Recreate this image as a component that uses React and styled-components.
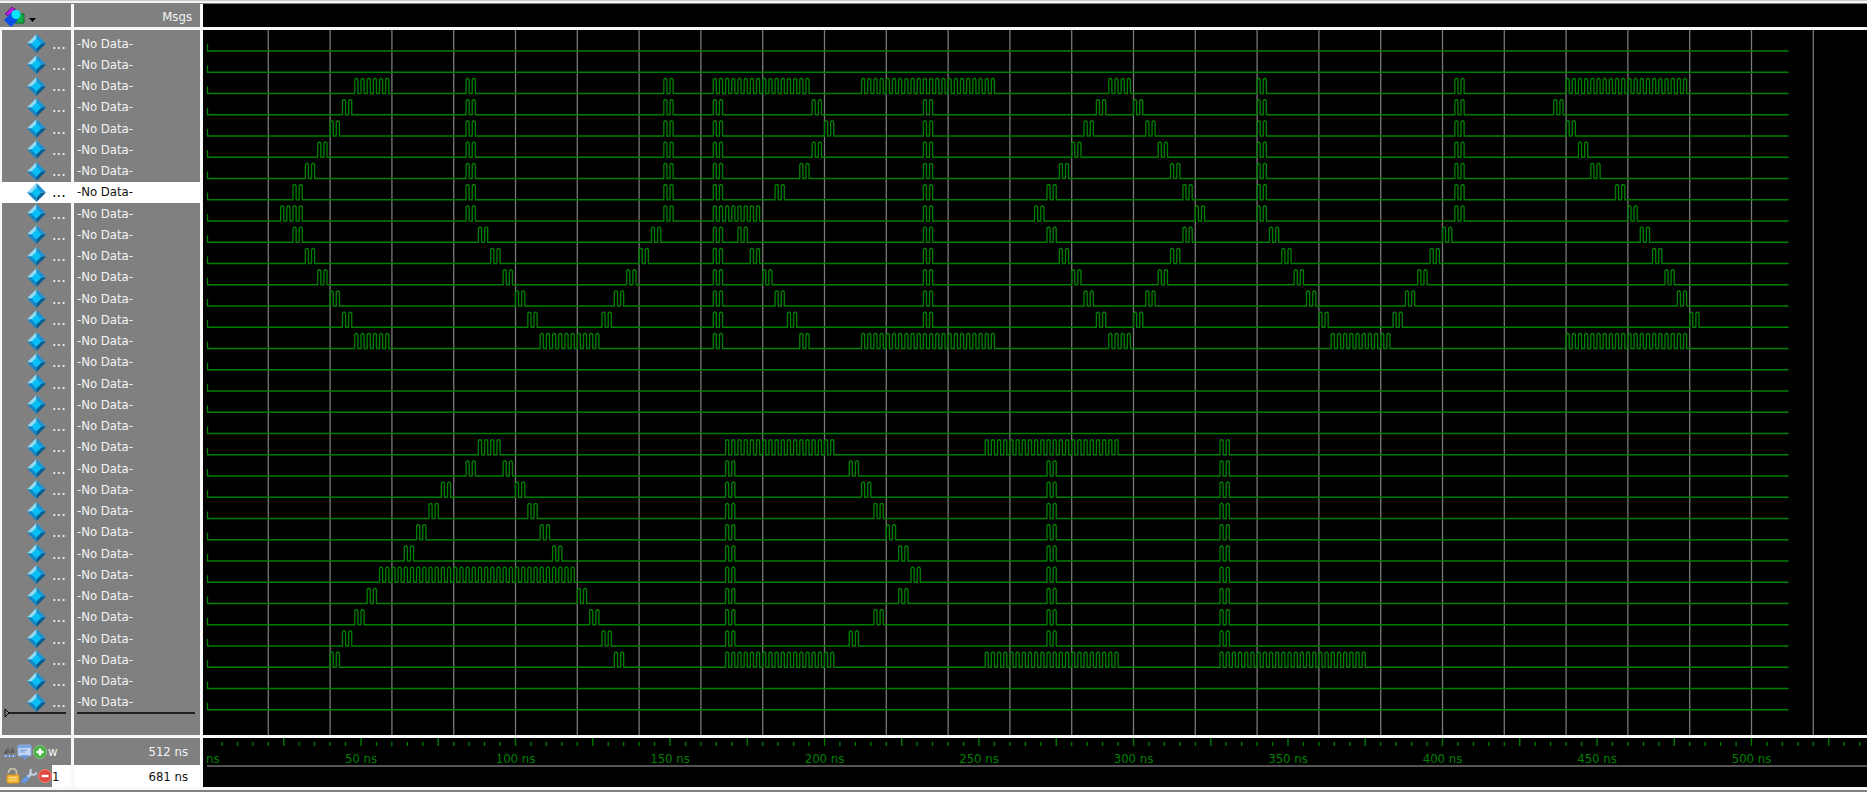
import React from "react";
import styled, { createGlobalStyle } from "styled-components";

const GRAY = "#808080";
const GREEN = "#008000";
const FONT = '"DejaVu Sans Condensed", "Open Sans", sans-serif';

const NS = 3.09;
const ORIGIN = 0.5;
const END = 512;
const ROWS = 32;
const PITCH = 680 / ROWS;
const SELECTED = 7;

const xAt = (ns) => ORIGIN + ns * NS;

/* Each entry lists the 4 ns slots in which a signal toggles, as slot or [first, last]. */
const PULSES = {
  2: [[12, 14], 21, 37, [41, 48], [53, 63], [73, 74], 85, 101, [110, 119]],
  3: [11, 21, 37, 41, 49, 58, 72, 75, 85, 101, 109],
  4: [10, 21, 37, 41, 50, 58, 71, 76, 85, 101, 110],
  5: [9, 21, 37, 41, 49, 58, 70, 77, 85, 101, 111],
  6: [8, 21, 37, 41, 48, 58, 69, 78, 85, 101, 112],
  7: [7, 21, 37, 41, 46, 58, 68, 79, 85, 101, 114],
  8: [[6, 7], 21, 37, [41, 44], 58, 67, 80, 85, 101, 115],
  9: [7, 22, 36, 41, 43, 58, 68, 79, 86, 100, 116],
  10: [8, 23, 35, 41, 44, 58, 69, 78, 87, 99, 117],
  11: [9, 24, 34, 41, 45, 58, 70, 77, 88, 98, 118],
  12: [10, 25, 33, 41, 46, 58, 71, 76, 89, 97, 119],
  13: [11, 26, 32, 41, 47, 58, 72, 75, 90, 96, 120],
  14: [[12, 14], [27, 31], 41, 48, [53, 63], [73, 74], [91, 95], [110, 119]],
  19: [[22, 23], [42, 50], [63, 73], 82],
  20: [21, 24, 42, 52, 68, 82],
  21: [19, 25, 42, 53, 68, 82],
  22: [18, 26, 42, 54, 68, 82],
  23: [17, 27, 42, 55, 68, 82],
  24: [16, 28, 42, 56, 68, 82],
  25: [[14, 29], 42, 57, 68, 82],
  26: [13, 30, 42, 56, 68, 82],
  27: [12, 31, 42, 54, 68, 82],
  28: [11, 32, 42, 52, 68, 82],
  29: [10, 33, [42, 50], [63, 73], [82, 93]],
};

const range = (n) => Array.from({ length: n }, (_, i) => i);

const GlobalStyle = createGlobalStyle`
  * { box-sizing: border-box; }
  body {
    margin: 0;
    background: ${GRAY};
    font-family: ${FONT};
    font-size: 13px;
    color: #f4f4f4;
  }
`;

const Window = styled.main`
  display: flex;
  flex-direction: column;
  min-height: 100vh;
  padding-bottom: 2px;
`;

const TopEdge = styled.div`
  height: 4px;
  background: #f4f4f4;
  border-top: 1px solid #c8c8c8;
  border-bottom: 1px solid ${GRAY};
`;

const Band = styled.section`
  display: flex;
  flex: ${(p) => (p.$grow ? "1 0 auto" : "0 0 auto")};
  height: ${(p) => p.$height || "auto"};
  border-bottom: 3px solid #f8f8f8;
`;

const SidePane = styled.div`
  display: flex;
  flex-direction: column;
  flex: 0 0 203px;
  border-right: 3px solid #f8f8f8;
  background: linear-gradient(
    to right,
    ${(p) => (p.$gutter ? "#f8f8f8" : GRAY)} 2px,
    ${GRAY} 2px 71px,
    #f8f8f8 71px 74px,
    ${GRAY} 74px
  );
`;

const Canvas = styled.div`
  flex: 1 1 0;
  min-width: 0;
  padding-left: 3px;
  background: #000;
  overflow: hidden;
`;

const HeaderCells = styled.div`
  display: flex;
  flex: 1;
  align-items: center;
  justify-content: space-between;
  padding: 2px 8px 0 3px;
`;

const IconButton = styled.button`
  display: inline-flex;
  align-items: center;
  gap: 4px;
  padding: 0;
  border: 0;
  background: none;
  line-height: 0;
`;

const SignalTable = styled.table`
  width: 200px;
  height: 680px;
  margin-top: 3px;
  border-collapse: separate;
  border-spacing: 0;
  table-layout: fixed;
`;

const SignalRow = styled.tr`
  color: ${(p) => (p.$selected ? "#101010" : "#f4f4f4")};
  background: ${(p) => (p.$selected ? "#fff" : "transparent")};
`;

const NameCell = styled.td`
  width: 71px;
  padding: 0 0 0 27px;
  line-height: 20px;
`;

const NameContent = styled.span`
  display: flex;
  align-items: center;
  gap: 6px;
`;

const Ellipsis = styled.span`
  font-size: 16px;
`;

const ValueCell = styled.td`
  padding: 0 0 0 6px;
  line-height: 20px;
  white-space: nowrap;
`;

const Marker = styled.svg`
  display: block;
  margin-top: -5px;
`;

const Chart = styled.svg`
  display: block;
  width: 100%;
  height: ${(p) => p.$height};
  font-family: ${FONT};
  font-size: 13px;
`;

const TimeRow = styled.div`
  display: flex;
  height: ${(p) => (p.$active ? "22px" : "27px")};
  align-items: center;
  color: ${(p) => (p.$active ? "#101010" : "#f4f4f4")};
`;

const Tools = styled.div`
  display: flex;
  align-items: center;
  flex: 0 0 ${(p) => p.$width};
  gap: 1px;
  padding-left: ${(p) => p.$indent};
`;

const TimeName = styled.span`
  flex: 0 0 ${(p) => p.$width};
  align-self: stretch;
  display: flex;
  align-items: center;
  background: ${(p) => (p.$active ? "#fff" : "transparent")};
`;

const TimeValue = styled.span`
  flex: 1;
  align-self: stretch;
  display: flex;
  align-items: center;
  justify-content: flex-end;
  margin-left: 3px;
  padding-right: 12px;
  background: ${(p) => (p.$active ? "#fff" : "transparent")};
`;

function Diamond() {
  return (
    <svg width="19" height="19" viewBox="0 0 19 19" aria-hidden="true">
      <path d="M9.5 0 L0 9.5 L9.5 9.5 Z" fill="#8fdcf6" />
      <path d="M9.5 0 L19 9.5 L9.5 9.5 Z" fill="#1894d4" />
      <path d="M0 9.5 L9.5 19 L9.5 9.5 Z" fill="#1488c6" />
      <path d="M19 9.5 L9.5 19 L9.5 9.5 Z" fill="#065f92" />
      <path d="M9.5 4.5 L14.5 9.5 L9.5 14.5 L4.5 9.5 Z" fill="#08c0f6" />
    </svg>
  );
}

function FilterIcon() {
  return (
    <svg width="33" height="21" viewBox="0 0 33 21" aria-hidden="true">
      <path d="M2 8 L9 1 L13 4 L6 10 Z" fill="#b020d8" stroke="#70108c" />
      <path d="M13 8 H21 V17 H12 Z" fill="#10b048" stroke="#086c2c" />
      <path d="M8 7 L15 14 L8 21 L1 14 Z" fill="#0850e8" />
      <circle cx="13" cy="8.500" r="4.500" fill="#08e4fc" />
      <path d="M26 12 H33 L29.500 16 Z" fill="#000" />
    </svg>
  );
}

function RulerIcon() {
  return (
    <svg width="13" height="14" viewBox="0 0 12 14" aria-hidden="true">
      <path d="M0 9 L4 2 L4 9 Z M5 2 L7 8 L9 2 L11 8 H5 Z" fill="#5a5a5a" />
      <path d="M0 11 H12" stroke="#6a94d0" strokeWidth="2" />
      <path d="M2 10 V12 M6 10 V12 M10 10 V12" stroke="#b8d0f0" />
    </svg>
  );
}

function NoteIcon() {
  return (
    <svg width="15" height="16" viewBox="0 0 15 16" aria-hidden="true">
      <rect x="1" y="1" width="13" height="11" rx="1" fill="#c4d8f6" stroke="#8cacdf" />
      <rect x="1" y="1" width="13" height="3" fill="#7ca4e4" />
      <path d="M3 6 H10 M3 8 H8" stroke="#6c90cc" />
      <path d="M4 11 H12 L8 16 Z" fill="#6c98e0" />
    </svg>
  );
}

function RoundIcon({ plus }) {
  return (
    <svg width="14" height="14" viewBox="0 0 14 14" aria-hidden="true">
      <circle cx="7" cy="7" r="6.500" fill={plus ? "#4cae48" : "#e04a40"} stroke={plus ? "#7cc878" : "#ec8078"} />
      <path d="M3.500 7 H10.500" stroke="#fff" strokeWidth="2.400" />
      {plus && <path d="M7 3.500 V10.500" stroke="#fff" strokeWidth="2.400" />}
    </svg>
  );
}

function LockIcon() {
  return (
    <svg width="14" height="16" viewBox="0 0 14 16" aria-hidden="true">
      <path d="M2.500 5 V4.500 A4 4 0 0 1 10.500 4.500 V8" fill="none" stroke="#c8c0a8" strokeWidth="1.800" />
      <rect x="1" y="7" width="12" height="8" rx="1" fill="#f4b838" stroke="#d89420" />
      <path d="M3 9.500 H11 M3 12 H11" stroke="#fce090" />
    </svg>
  );
}

function WrenchIcon() {
  return (
    <svg width="16" height="16" viewBox="0 0 16 16" aria-hidden="true">
      <path d="M3 13 L7 9" stroke="#6498e4" strokeWidth="4.500" strokeLinecap="round" />
      <path d="M7 9 L11 5" stroke="#c4cedc" strokeWidth="2.500" />
      <path d="M10 1 Q8.500 6 11 6.500 Q15 7.500 15.500 4" fill="none" stroke="#c4cedc" strokeWidth="2.200" />
    </svg>
  );
}

function wavePath(row) {
  const base = 18 + row * PITCH;
  const top = base - 15;
  let d = `M${xAt(0) + 1} ${base - 7} V${base}`;
  (PULSES[row] || []).forEach((span) => {
    const [first, last] = Array.isArray(span) ? span : [span, span];
    for (let t = first * 4; t < (last + 1) * 4; t += 2) {
      d += ` H${xAt(t)} V${top + 1} L${xAt(t) + 1} ${top} H${xAt(t + 1) - 1} L${xAt(t + 1)} ${top + 1} V${base}`;
    }
  });
  return `${d} H${xAt(END)}`;
}

function Waveforms() {
  return (
    <Chart $height="100%" role="img" aria-label="Waveforms">
      {range(26).map((i) => (
        <line key={i} x1={xAt((i + 1) * 20)} x2={xAt((i + 1) * 20)} y1="0" y2="100%" stroke="#787878" strokeWidth="1.300" />
      ))}
      <svg y="3" overflow="visible">
        {range(ROWS).map((row) => (
          <path key={row} d={wavePath(row)} fill="none" stroke={GREEN} strokeWidth="1.300" />
        ))}
      </svg>
    </Chart>
  );
}

function Ruler() {
  return (
    <Chart $height="49px" role="img" aria-label="Time ruler">
      {range(107).map((i) => {
        const t = (i + 1) * 5;
        return (
          <line key={t} x1={xAt(t)} x2={xAt(t)} y1={t % 25 ? 4 : 0} y2="8" stroke={GREEN} strokeWidth="1.300" />
        );
      })}
      <text x="0" y="25" fill={GREEN}>
        ns
      </text>
      {range(10).map((i) => (
        <text key={i} x={xAt((i + 1) * 50)} y="25" textAnchor="middle" fill={GREEN}>
          {`${(i + 1) * 50} ns`}
        </text>
      ))}
      <line x1="1" x2="100%" y1="28" y2="28" stroke="#707070" strokeWidth="1.300" />
    </Chart>
  );
}

export default function App() {
  return (
    <>
      <GlobalStyle />
      <Window>
        <TopEdge />
        <Band $height="26px">
          <SidePane>
            <HeaderCells>
              <IconButton aria-label="Signal filter">
                <FilterIcon />
              </IconButton>
              <span>Msgs</span>
            </HeaderCells>
          </SidePane>
          <Canvas />
        </Band>
        <Band $grow>
          <SidePane $gutter>
            <SignalTable>
              <tbody>
                {range(ROWS).map((row) => (
                  <SignalRow key={row} $selected={row === SELECTED}>
                    <NameCell>
                      <NameContent>
                        <Diamond />
                        <Ellipsis>...</Ellipsis>
                      </NameContent>
                    </NameCell>
                    <ValueCell>-No Data-</ValueCell>
                  </SignalRow>
                ))}
              </tbody>
            </SignalTable>
            <Marker width="200" height="10" aria-hidden="true">
              <path d="M5 1 L9 5 L5 9 Z" fill="none" stroke="#000" />
              <path d="M9 5 H66 M77 5 H195" stroke="#000" strokeWidth="1.500" />
            </Marker>
          </SidePane>
          <Canvas>
            <Waveforms />
          </Canvas>
        </Band>
        <Band $height="52px">
          <SidePane>
            <TimeRow>
              <Tools $width="48px" $indent="3px">
                <IconButton aria-label="Cursor ruler"><RulerIcon /></IconButton>
                <IconButton aria-label="Edit grid"><NoteIcon /></IconButton>
                <IconButton aria-label="Add cursor"><RoundIcon plus /></IconButton>
              </Tools>
              <TimeName $width="23px">w</TimeName>
              <TimeValue>512 ns</TimeValue>
            </TimeRow>
            <TimeRow $active>
              <Tools $width="52px" $indent="6px">
                <IconButton aria-label="Lock cursor"><LockIcon /></IconButton>
                <IconButton aria-label="Cursor settings"><WrenchIcon /></IconButton>
                <IconButton aria-label="Remove cursor"><RoundIcon /></IconButton>
              </Tools>
              <TimeName $width="19px" $active>1</TimeName>
              <TimeValue $active>681 ns</TimeValue>
            </TimeRow>
          </SidePane>
          <Canvas>
            <Ruler />
          </Canvas>
        </Band>
      </Window>
    </>
  );
}
